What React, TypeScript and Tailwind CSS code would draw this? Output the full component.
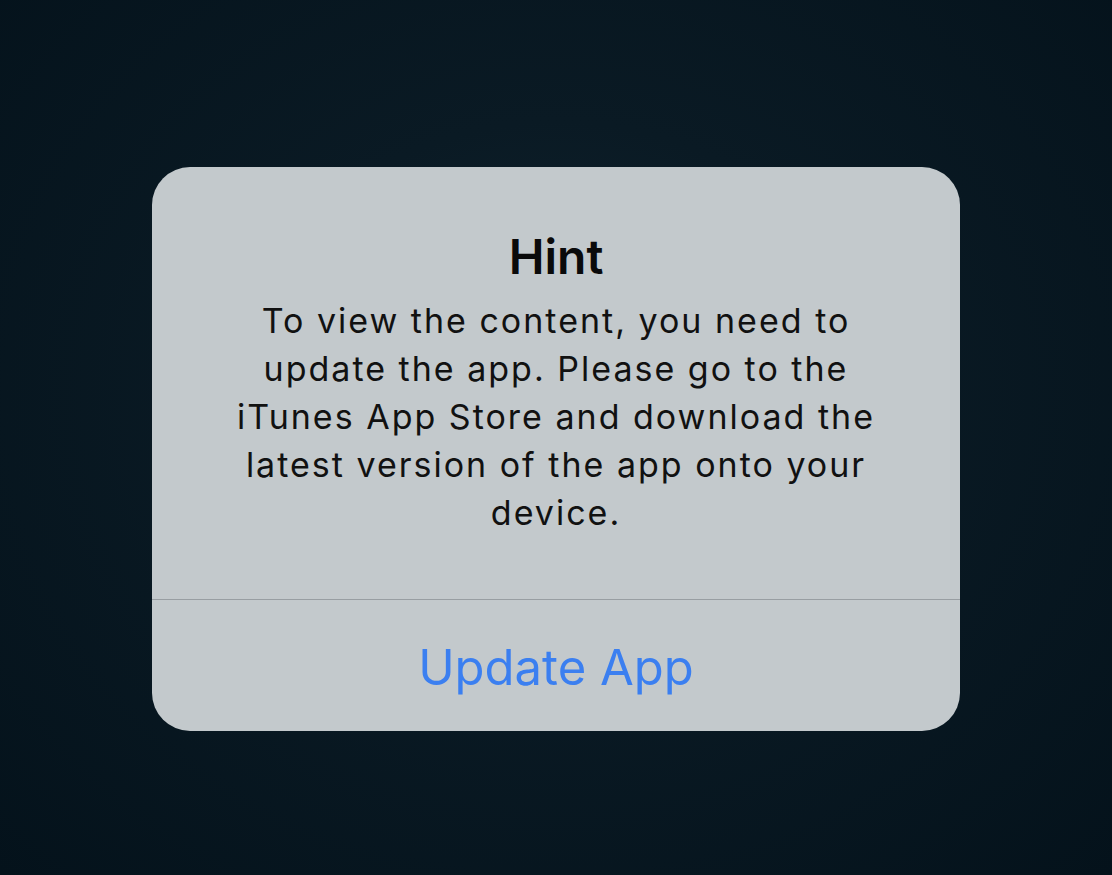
export default function App() {
  return (
    <div
      className="w-[1112px] h-[875px] flex items-start justify-center bg-[radial-gradient(ellipse_at_50%_45%,#102430_0%,#0a1a24_40%,#04121b_100%)]"
      style={{ fontFamily: 'Inter, "Liberation Sans", sans-serif' }}
    >
      <div className="mt-[167px] w-[808px] h-[564px] rounded-[38px] bg-[#c3c9cc] flex flex-col overflow-hidden">
        <div className="h-[432px] flex flex-col items-center pt-[62px]">
          <div className="text-[48px] leading-[56px] font-semibold text-[#0a0a0a]">Hint</div>
          <div className="mt-[12px] w-[780px] text-center text-[34px] leading-[48px] text-[#111] tracking-[2px]">
            To view the content, you need to
            <br />
            update the app. Please go to the
            <br />
            iTunes App Store and download the
            <br />
            latest version of the app onto your
            <br />
            device.
          </div>
        </div>
        <div className="h-px bg-[#989ea2]" />
        <div className="flex-1 flex items-center justify-center pt-[3px]">
          <span className="text-[49px] leading-none text-[#3b7ff0]">Update App</span>
        </div>
      </div>
    </div>
  );
}
